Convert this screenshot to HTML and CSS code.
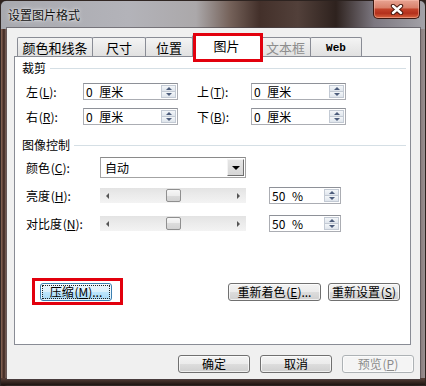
FILE: index.html
```html
<!DOCTYPE html>
<html lang="zh-CN">
<head>
<meta charset="utf-8">
<title>设置图片格式</title>
<link rel="stylesheet" href="styles.css">
</head>
<body>
<div class="window">
  <div class="titlebar">
    <div class="title">设置图片格式</div>
    <div class="close">
      <svg width="14" height="11" viewBox="0 0 14 11"><path d="M3 2 L11 9 M11 2 L3 9" stroke="#4a1a10" stroke-width="4.4" stroke-linecap="round"/><path d="M3 2 L11 9 M11 2 L3 9" stroke="#fff" stroke-width="2.4" stroke-linecap="round"/></svg>
    </div>
  </div>
  <div class="client">
    <div class="tabs">
      <div class="tab t-line">颜色和线条</div>
      <div class="tab t-size">尺寸</div>
      <div class="tab t-pos">位置</div>
      <div class="tab t-pic active">图片</div>
      <div class="tab t-text disabled">文本框</div>
      <div class="tab t-web">Web</div>
    </div>
    <div class="panel">
      <div class="group">裁剪</div>
      <div class="crop">
        <label>左 (<u>L</u>):</label>
        <div class="spin"><span class="val">0 厘米</span><span class="arrows"><i class="up"></i><i class="dn"></i></span></div>
        <label class="lbl2">上 (<u>T</u>):</label>
        <div class="spin"><span class="val">0 厘米</span><span class="arrows"><i class="up"></i><i class="dn"></i></span></div>
        <label>右 (<u>R</u>):</label>
        <div class="spin"><span class="val">0 厘米</span><span class="arrows"><i class="up"></i><i class="dn"></i></span></div>
        <label class="lbl2">下 (<u>B</u>):</label>
        <div class="spin"><span class="val">0 厘米</span><span class="arrows"><i class="up"></i><i class="dn"></i></span></div>
      </div>
      <div class="group g2">图像控制</div>
      <div class="ctl">
        <label>颜色 (<u>C</u>):</label>
        <div class="select"><span class="val">自动</span><span class="drop"></span></div>
        <label>亮度 (<u>H</u>):</label>
        <div class="slider"><i class="la"></i><i class="thumb"></i><i class="ra"></i></div>
        <div class="spin pct"><span class="val">50 %</span><span class="arrows"><i class="up"></i><i class="dn"></i></span></div>
        <label>对比度 (<u>N</u>):</label>
        <div class="slider"><i class="la"></i><i class="thumb"></i><i class="ra"></i></div>
        <div class="spin pct"><span class="val">50 %</span><span class="arrows"><i class="up"></i><i class="dn"></i></span></div>
      </div>
      <div class="btnrow">
        <div class="btn focus b-compress"><span class="focusrect">压缩 (<u>M</u>)...</span></div>
        <div class="btn b-recolor">重新着色 (<u>E</u>)...</div>
        <div class="btn b-reset">重新设置 (<u>S</u>)</div>
      </div>
    </div>
    <div class="footer">
      <div class="btn">确定</div>
      <div class="btn">取消</div>
      <div class="btn disabled">预览 (<u>P</u>)</div>
    </div>
  </div>
  <div class="mark mark-tab"></div>
  <div class="mark mark-btn"></div>
</div>
</body>
</html>
```

FILE: styles.css
```css
* { box-sizing: border-box; }
html, body { margin: 0; padding: 0; }
body {
  width: 426px;
  height: 386px;
  overflow: hidden;
  background: #2e211c;
  font: 12px/14px "Noto Sans CJK SC", "Noto Sans", sans-serif;
  color: #000;
}
u { text-decoration: underline; text-underline-offset: 1px; }
label { word-spacing: -2px; }

.window {
  position: relative;
  width: 426px;
  height: 386px;
  display: flex;
  flex-direction: column;
  padding: 0 5px 6px 6px;
  border: 1px solid rgba(30, 22, 20, 0.85);
  border-radius: 6px 6px 0 0;
  background:
    linear-gradient(#5a4038, #1f1512) left bottom / 100% 7px no-repeat,
    linear-gradient(90deg, #a8a9af 0%, #b3b3b9 30%, #aba8aa 46%, #75625a 54%, #43302a 61%, #52403a 70%, #2e221e 79%, #7c7780 88%, #a3a2a8 100%) left top / 100% 28px no-repeat,
    linear-gradient(90deg, #8d6a5a 0, #3a2520 3px, #a48a7e 6px, #8a7a74 50%, #6b5853 97%, #9a9092 100%);
}

.titlebar {
  height: 27px;
  display: flex;
  align-items: flex-start;
  padding-left: 1px;
}
.title {
  margin-top: 7px;
  color: #121212;
  text-shadow: 0 0 5px rgba(255, 255, 255, 0.85), 0 0 2px rgba(255, 255, 255, 0.7);
}
.close {
  margin-left: auto;
  margin-top: -1px;
  width: 47px;
  height: 19px;
  border: 1px solid #3c1810;
  border-top: none;
  border-radius: 0 0 5px 5px;
  background: linear-gradient(#e8a493 0%, #d9806a 44%, #c3432b 50%, #b3301c 74%, #d8643f 100%);
  box-shadow: inset 0 0 0 1px rgba(255, 200, 185, 0.45);
  display: flex;
  align-items: center;
  justify-content: center;
}

.client {
  flex: 1;
  background: #f0f0f0;
  padding: 7px 6px 0 7px;
  box-shadow: 0 0 0 1px rgba(70, 66, 72, 0.55);
  display: flex;
  flex-direction: column;
}

.tabs {
  display: flex;
  align-items: flex-end;
  height: 21px;
  padding-left: 3px;
  position: relative;
  z-index: 1;
}
.tab {
  height: 19px;
  margin-left: -1px;
  border: 1px solid #898c95;
  border-bottom: none;
  border-radius: 2px 2px 0 0;
  background: linear-gradient(#f4f4f4, #e9e9e9 55%, #e1e1e1);
  display: flex;
  align-items: center;
  justify-content: center;
  padding-top: 1px;
  font-size: 13px;
}
.tab:first-child { margin-left: 0; }
.t-line { width: 76px; }
.t-size { width: 54px; }
.t-pos { width: 48px; }
.t-pic { width: 69px; }
.t-text { width: 51px; }
.t-web { width: 52px; font: bold 11px/14px "Liberation Mono", monospace; }
.tab.active {
  height: 22px;
  margin-bottom: -1px;
  background: #fff;
  padding-top: 0;
  padding-bottom: 2px;
}
.tab.disabled { color: #8d8d8d; }

.panel {
  width: 397px;
  height: 289px;
  border: 1px solid #898c95;
  background: #fff;
  padding: 4px 4px 0 7px;
  display: flex;
  flex-direction: column;
}

.group {
  height: 14px;
  display: flex;
  align-items: center;
  gap: 4px;
}
.group::after {
  content: "";
  flex: 1;
  height: 1px;
  background: #d5dfe5;
}
.g2 { margin-top: 13px; }

.crop {
  margin: 8px 0 0 4px;
  display: grid;
  grid-template-columns: 57px 95px 73px 95px;
  grid-auto-rows: 17px;
  row-gap: 8px;
  align-items: center;
}
.crop .lbl2 { padding-left: 19px; }

.spin {
  display: flex;
  height: 17px;
  border: 1px solid #abadb3;
  border-top-color: #8e9198;
  background: #fff;
}
.spin .val {
  flex: 1;
  padding-left: 2px;
  line-height: 15px;
  white-space: pre;
  word-spacing: 4px;
}
.arrows {
  width: 16px;
  display: flex;
  flex-direction: column;
  padding: 1px 1px 1px 0;
}
.arrows i {
  flex: 1;
  background: linear-gradient(#f3f6f9, #dfe5ec);
  border: 1px solid #c3cad4;
  display: flex;
  align-items: center;
  justify-content: center;
}
.arrows i + i { margin-top: -1px; }
.arrows .up::before {
  content: "";
  border: 3px solid transparent;
  border-top: none;
  border-bottom: 3px solid #4d5d7c;
}
.arrows .dn::before {
  content: "";
  border: 3px solid transparent;
  border-bottom: none;
  border-top: 3px solid #4d5d7c;
}

.ctl {
  margin: 5px 0 0 4px;
  display: grid;
  grid-template-columns: 74px 146px 23px 72px;
  grid-auto-rows: 21px;
  row-gap: 7px;
  align-items: center;
}
.ctl label { grid-column: 1; }
.select {
  grid-column: 2;
  display: flex;
  height: 21px;
  border: 1px solid #a3a3a3;
  border-top-color: #8a8a8a;
  background: #fff;
}
.select .val {
  flex: 1;
  padding-left: 4px;
  line-height: 19px;
}
.select .drop {
  width: 17px;
  margin: 1px;
  background: linear-gradient(#e6e6e6, #d6d6d6);
  border: 1px solid;
  border-color: #f4f4f4 #6f6f6f #6f6f6f #f4f4f4;
  display: flex;
  align-items: center;
  justify-content: center;
}
.select .drop::before {
  content: "";
  border: 4px solid transparent;
  border-bottom: none;
  border-top: 4px solid #000;
}

.slider {
  grid-column: 2;
  height: 15px;
  display: flex;
  align-items: center;
  justify-content: space-between;
  padding: 0 6px;
  background: linear-gradient(#e3e3e3, #ebebeb 45%, #f3f3f3);
}
.slider .la, .slider .ra { display: block; width: 0; height: 0; border: 3px solid transparent; }
.slider .la { border-left: none; border-right: 3px solid #555; }
.slider .ra { border-right: none; border-left: 3px solid #555; }
.slider .thumb {
  display: block;
  width: 15px;
  height: 13px;
  border: 1px solid #8f8f8f;
  border-radius: 2px;
  background: linear-gradient(#f7f7f7, #ececec 50%, #dcdcdc 50%, #d2d2d2);
}
.pct { grid-column: 4; }

.btn {
  height: 18px;
  border: 1px solid #707070;
  border-radius: 3px;
  background: linear-gradient(#f3f3f3 0%, #ebebeb 50%, #dddddd 50%, #cfcfcf 100%);
  box-shadow: inset 0 0 0 1px rgba(255, 255, 255, 0.65);
  display: flex;
  align-items: center;
  justify-content: center;
  white-space: nowrap;
  word-spacing: -2px;
}
.btn.focus {
  border-color: #3c7fb1;
  background: linear-gradient(#eaf6fd 0%, #d9f0fc 50%, #bee6fd 50%, #a7d9f5 100%);
  padding: 1px;
  align-items: stretch;
}
.focusrect {
  flex: 1;
  border: 1px dotted #222;
  display: flex;
  align-items: center;
  justify-content: center;
  line-height: 12px;
}
.btn.disabled {
  border-color: #adb2b5;
  background: #f4f4f4;
  color: #8b8b8b;
}

.btnrow {
  display: flex;
  margin: 49px 6px 0 18px;
}
.b-compress { width: 72px; }
.b-recolor { width: 93px; margin-left: auto; }
.b-reset { width: 72px; margin-left: 7px; }

.footer {
  margin-top: 10px;
  display: flex;
  justify-content: flex-end;
  gap: 10px;
}
.footer .btn { width: 72px; }

.mark {
  position: absolute;
  border: 3px solid #e2000d;
  pointer-events: none;
  z-index: 5;
}
.mark-tab { left: 192px; top: 32px; width: 70px; height: 29px; }
.mark-btn { left: 31px; top: 277px; width: 91px; height: 27px; }
```
